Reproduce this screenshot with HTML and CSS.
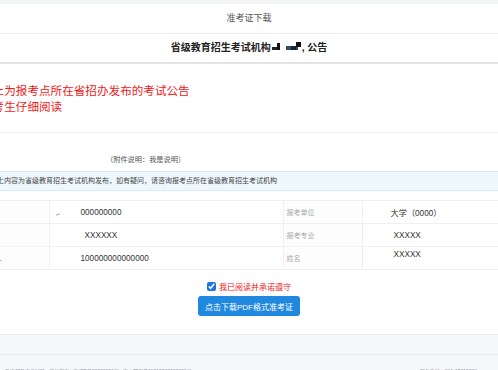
FILE: index.html
```html
<!DOCTYPE html>
<html lang="zh-CN">

<head>
  <meta charset="UTF-8" />
  <title>准考证下载</title>
  <link rel="stylesheet" href="styles.css">
</head>

<body>

  <div class="top-strip"></div>

  <header class="page-header">准考证下载</header>

  <div class="notice-title">
    省级教育招生考试机构<svg class="garble" width="30" height="10" viewBox="0 0 30 10">
      <rect x="0" y="5" width="8" height="3" fill="#222" />
      <rect x="5" y="1" width="3" height="7" fill="#111" />
      <rect x="14" y="4" width="5" height="4" fill="#2a4f7a" />
      <rect x="19" y="4" width="5" height="4" fill="#1b2330" />
      <rect x="24" y="0" width="5" height="5" fill="#111" />
      <rect x="24" y="5" width="2" height="3" fill="#444" />
    </svg>, 公告
  </div>

  <main class="content">
    <div class="warning">
      以上为报考点所在省招办发布的考试公告<br>
      请考生仔细阅读
    </div>

    <p class="attach-note">（附件说明：我是说明）</p>

    <div class="info-bar">以上内容为省级教育招生考试机构发布，如有疑问，请咨询报考点所在省级教育招生考试机构</div>

    <table class="ticket-table">
      <colgroup>
        <col class="col-label-left">
        <col class="col-value-left">
        <col class="col-label-right">
        <col class="col-value-right">
      </colgroup>
      <tr>
        <td class="label"></td>
        <td class="value"><span class="mark"></span>000000000</td>
        <td class="label">报考单位</td>
        <td class="value right">大学（0000）</td>
      </tr>
      <tr>
        <td class="label"></td>
        <td class="value shift">XXXXXX</td>
        <td class="label">报考专业</td>
        <td class="value right shift">XXXXX</td>
      </tr>
      <tr>
        <td class="label"><span class="dot"></span></td>
        <td class="value">100000000000000</td>
        <td class="label">姓名</td>
        <td class="value right high">XXXXX</td>
      </tr>
    </table>

    <div class="agree-row">
      <input type="checkbox" id="agree" checked />
      <label for="agree">我已阅读并承诺遵守</label>
    </div>

    <div class="btn-row">
      <button type="button" class="download-btn">点击下载PDF格式准考证</button>
    </div>
  </main>

  <footer class="site-footer">
    <div class="footer-band"></div>
    <div class="footer-info">
      <span>主办单位：教育部教育考试院 &nbsp; 版权所有 &nbsp; 京ICP备00000000号 &nbsp; 京公网安备11010202000000号</span>
      <span class="phone">服务热线：010-67410388</span>
    </div>
  </footer>

</body>

</html>
```

FILE: styles.css
```css
body {
  margin: 0;
  font-family: "Liberation Sans", "Noto Sans CJK SC", sans-serif;
  color: #333;
  background: #fff;
  overflow: hidden;
}

.top-strip {
  height: 4px;
  background: #f3f4f6;
}

.page-header {
  height: 29px;
  line-height: 29px;
  text-align: center;
  font-size: 9px;
  color: #555;
  border-bottom: 1px solid #ececec;
}

.notice-title {
  height: 28px;
  line-height: 28px;
  text-align: center;
  font-size: 10px;
  font-weight: bold;
  color: #222;
  border-bottom: 2px solid #e2e3e5;
}

.garble {
  vertical-align: -1px;
  margin-left: 1px;
}

.content {
  margin-left: -30px;
  width: 528px;
}

.warning {
  padding: 19px 0 17px 11px;
  font-size: 11.6px;
  line-height: 16px;
  color: #f01818;
  border-bottom: 1px solid #ededed;
}

.attach-note {
  margin: 22px 0 0 136px;
  font-size: 7.2px;
  line-height: 10px;
  color: #555;
}

.info-bar {
  margin-top: 6px;
  height: 18px;
  line-height: 18px;
  padding-left: 20px;
  font-size: 7px;
  color: #444;
  background: #eef8fc;
  border-top: 1px solid #d6edf8;
  border-bottom: 1px solid #d6edf8;
}

.ticket-table {
  margin-top: 9px;
  width: 528px;
  table-layout: fixed;
  border-collapse: collapse;
}

.col-label-left { width: 79px; }
.col-value-left { width: 234px; }
.col-label-right { width: 79px; }
.col-value-right { width: 136px; }

.ticket-table td {
  height: 22px;
  padding: 0;
  border-top: 1px solid #f0f0f0;
  border-bottom: 1px solid #f0f0f0;
  border-right: 1px solid #f0f0f0;
  white-space: nowrap;
  overflow: hidden;
}

.ticket-table .label {
  padding-left: 3px;
  font-size: 7px;
  color: #aaa;
  background: #fdfdfd;
}

.ticket-table .value {
  padding-left: 31px;
  font-size: 8.2px;
  color: #333;
}

.ticket-table .value.shift {
  padding-left: 35px;
}

.ticket-table .value.right {
  padding-left: 28px;
}

.ticket-table .value.right.shift {
  padding-left: 31px;
}

.ticket-table .value.high {
  padding-left: 31px;
  vertical-align: top;
  padding-top: 3px;
  height: 19px;
}

.mark {
  display: inline-block;
  width: 4px;
  height: 1px;
  margin: 0 21px 0 -25px;
  background: #e0a070;
  transform: rotate(-20deg);
}

.dot {
  display: inline-block;
  width: 2px;
  height: 1px;
  margin-left: 27px;
  background: #bbb;
}

.agree-row {
  margin-top: 11px;
  display: flex;
  justify-content: center;
  align-items: center;
  gap: 3px;
  padding-left: 30px;
  height: 10px;
}

.agree-row input {
  width: 9px;
  height: 9px;
  margin: 0;
  accent-color: #1a73e8;
}

.agree-row label {
  font-size: 8px;
  color: #f01818;
}

.btn-row {
  margin-top: 5px;
  display: flex;
  justify-content: center;
  padding-left: 30px;
}

.download-btn {
  width: 102px;
  height: 20px;
  padding: 0;
  font-family: inherit;
  font-size: 8px;
  color: #fff;
  background: #2188e0;
  border: none;
  border-radius: 3px;
}

.site-footer {
  margin-top: 18px;
  border-top: 1px solid #ebecee;
  background: #f6f7f9;
}

.footer-band {
  height: 19px;
  border-bottom: 1px solid #ebecee;
}

.footer-info {
  display: flex;
  justify-content: space-between;
  padding: 12px 21px 0 0;
  margin-left: -20px;
  font-size: 5px;
  color: #8a94a6;
}
```
